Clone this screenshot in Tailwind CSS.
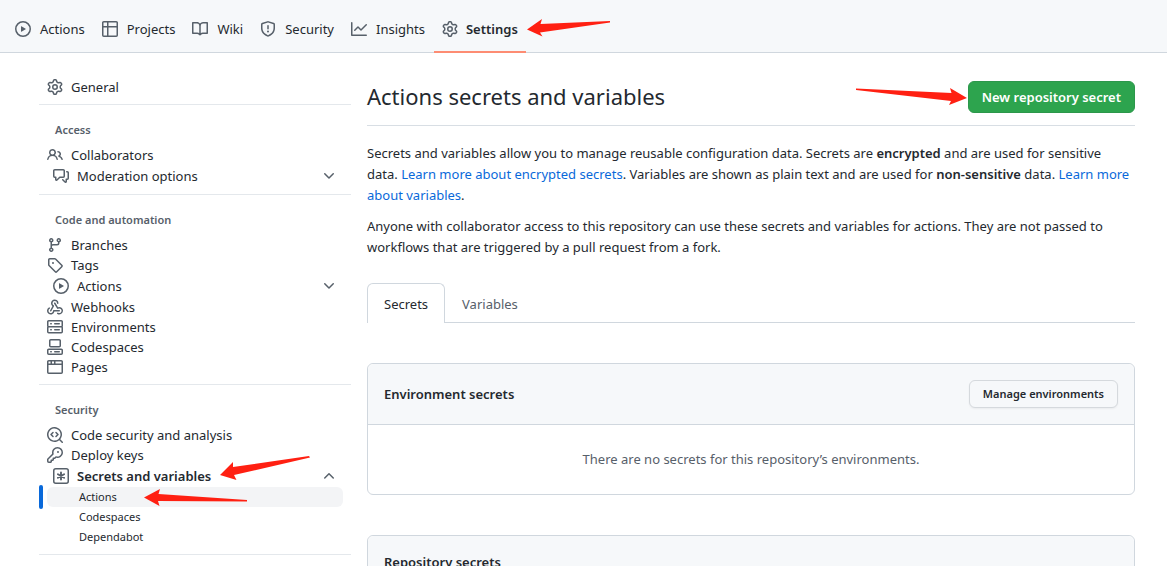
<!DOCTYPE html>
<html lang="en">
<head>
<meta charset="utf-8">
<meta name="viewport" content="width=device-width, initial-scale=1">
<title>Actions secrets and variables</title>
<script src="https://cdn.jsdelivr.net/npm/@tailwindcss/browser@4"></script>
</head>
<body class="h-screen overflow-hidden bg-white font-['Noto_Sans','Open_Sans',sans-serif] text-[13px] leading-[21px] text-[#24292f]">

<svg class="hidden" aria-hidden="true">
  <symbol id="play" viewBox="0 0 16 16"><path d="M8 0a8 8 0 1 1 0 16A8 8 0 0 1 8 0ZM1.5 8a6.5 6.5 0 1 0 13 0 6.5 6.5 0 0 0-13 0Zm4.879-2.773 4.264 2.559a.25.25 0 0 1 0 .428l-4.264 2.559A.25.25 0 0 1 6 10.559V5.442a.25.25 0 0 1 .379-.215Z"/></symbol>
  <symbol id="table" viewBox="0 0 16 16"><path d="M0 1.75C0 .784.784 0 1.75 0h12.5C15.216 0 16 .784 16 1.75v12.5A1.75 1.75 0 0 1 14.25 16H1.75A1.75 1.75 0 0 1 0 14.25ZM6.5 6.5v8h7.75a.25.25 0 0 0 .25-.25V6.5Zm8-1.5V1.75a.25.25 0 0 0-.25-.25H6.5V5Zm-13 1.5v7.75c0 .138.112.25.25.25H5v-8ZM5 5V1.5H1.75a.25.25 0 0 0-.25.25V5Z"/></symbol>
  <symbol id="book" viewBox="0 0 16 16"><path d="M0 1.75A.75.75 0 0 1 .75 1h4.253c1.227 0 2.317.59 3 1.501A3.743 3.743 0 0 1 11.006 1h4.245a.75.75 0 0 1 .75.75v10.5a.75.75 0 0 1-.75.75h-4.507a2.25 2.25 0 0 0-1.591.659l-.622.621a.75.75 0 0 1-1.06 0l-.622-.621A2.25 2.25 0 0 0 5.258 13H.75a.75.75 0 0 1-.75-.75Zm7.251 10.324.004-5.073-.002-2.253A2.25 2.25 0 0 0 5.003 2.5H1.5v9h3.757a3.75 3.75 0 0 1 1.994.574ZM8.755 4.75l-.004 7.322a3.752 3.752 0 0 1 1.992-.572H14.5v-9h-3.495a2.25 2.25 0 0 0-2.25 2.25Z"/></symbol>
  <symbol id="shield" viewBox="0 0 16 16"><path d="M7.467.133a1.748 1.748 0 0 1 1.066 0l5.25 1.68A1.75 1.75 0 0 1 15 3.48V7c0 1.566-.32 3.182-1.303 4.682-.983 1.498-2.585 2.813-5.032 3.855a1.697 1.697 0 0 1-1.33 0c-2.447-1.042-4.049-2.357-5.032-3.855C1.32 10.182 1 8.566 1 7V3.48a1.75 1.75 0 0 1 1.217-1.667Zm.61 1.429a.25.25 0 0 0-.153 0l-5.25 1.68a.25.25 0 0 0-.174.238V7c0 1.358.275 2.666 1.057 3.86.784 1.194 2.121 2.34 4.366 3.297a.196.196 0 0 0 .154 0c2.245-.956 3.582-2.104 4.366-3.298C13.225 9.666 13.5 8.36 13.5 7V3.48a.251.251 0 0 0-.174-.237l-5.25-1.68ZM8.75 4.75v3a.75.75 0 0 1-1.5 0v-3a.75.75 0 0 1 1.5 0ZM9 10.5a1 1 0 1 1-2 0 1 1 0 0 1 2 0Z"/></symbol>
  <symbol id="graph" viewBox="0 0 16 16"><path d="M1.5 1.75V13.5h13.75a.75.75 0 0 1 0 1.5H.75a.75.75 0 0 1-.75-.75V1.75a.75.75 0 0 1 1.5 0Zm14.28 2.53-5.25 5.25a.75.75 0 0 1-1.06 0L7 7.06 4.28 9.78a.751.751 0 0 1-1.042-.018.751.751 0 0 1-.018-1.042l3.25-3.25a.75.75 0 0 1 1.06 0L10 7.94l4.72-4.72a.751.751 0 0 1 1.042.018.751.751 0 0 1 .018 1.042Z"/></symbol>
  <symbol id="gear" viewBox="0 0 16 16"><path d="M8 0a8.2 8.2 0 0 1 .701.031C9.444.095 9.99.645 10.16 1.29l.288 1.107c.018.066.079.158.212.224.231.114.454.243.668.386.123.082.233.09.299.071l1.103-.303c.644-.176 1.392.021 1.82.63.27.385.506.792.704 1.218.315.675.111 1.422-.364 1.891l-.814.806c-.049.048-.098.147-.088.294.016.257.016.515 0 .772-.01.147.038.246.088.294l.814.806c.475.469.679 1.216.364 1.891a7.977 7.977 0 0 1-.704 1.217c-.428.61-1.176.807-1.82.63l-1.102-.302c-.067-.019-.177-.011-.3.071a5.909 5.909 0 0 1-.668.386c-.133.066-.194.158-.211.224l-.29 1.106c-.168.646-.715 1.196-1.458 1.26a8.006 8.006 0 0 1-1.402 0c-.743-.064-1.289-.614-1.458-1.26l-.289-1.106c-.018-.066-.079-.158-.212-.224a5.738 5.738 0 0 1-.668-.386c-.123-.082-.233-.09-.299-.071l-1.103.303c-.644.176-1.392-.021-1.82-.63a8.12 8.12 0 0 1-.704-1.218c-.315-.675-.111-1.422.363-1.891l.815-.806c.05-.048.098-.147.088-.294a6.214 6.214 0 0 1 0-.772c.01-.147-.038-.246-.088-.294l-.815-.806C.635 6.045.431 5.298.746 4.623a7.92 7.92 0 0 1 .704-1.217c.428-.61 1.176-.807 1.82-.63l1.102.302c.067.019.177.011.3-.071.214-.143.437-.272.668-.386.133-.066.194-.158.211-.224l.29-1.106C6.009.645 6.556.095 7.299.03 7.53.01 7.764 0 8 0Zm-.571 1.525c-.036.003-.108.036-.137.146l-.289 1.105c-.147.561-.549.967-.998 1.189-.173.086-.34.183-.5.29-.417.278-.97.423-1.529.27l-1.103-.303c-.109-.03-.175.016-.195.045-.22.312-.412.644-.573.99-.014.031-.021.11.059.19l.815.806c.411.406.562.957.53 1.456a4.709 4.709 0 0 0 0 .582c.032.499-.119 1.05-.53 1.456l-.815.806c-.081.08-.073.159-.059.19.162.346.353.677.573.989.02.03.085.076.195.046l1.102-.303c.56-.153 1.113-.008 1.53.27.161.107.328.204.501.29.447.222.85.629.997 1.189l.289 1.105c.029.109.101.143.137.146a6.6 6.6 0 0 0 1.142 0c.036-.003.108-.036.137-.146l.289-1.105c.147-.561.549-.967.998-1.189.173-.086.34-.183.5-.29.417-.278.97-.423 1.529-.27l1.103.303c.109.029.175-.016.195-.045.22-.313.411-.644.573-.99.014-.031.021-.11-.059-.19l-.815-.806c-.411-.406-.562-.957-.53-1.456a4.709 4.709 0 0 0 0-.582c-.032-.499.119-1.05.53-1.456l.815-.806c.081-.08.073-.159.059-.19a6.464 6.464 0 0 0-.573-.989c-.02-.03-.085-.076-.195-.046l-1.102.303c-.56.153-1.113.008-1.53-.27a4.44 4.44 0 0 0-.501-.29c-.447-.222-.85-.629-.997-1.189l-.289-1.105c-.029-.11-.101-.143-.137-.146a6.6 6.6 0 0 0-1.142 0ZM11 8a3 3 0 1 1-6 0 3 3 0 0 1 6 0ZM9.5 8a1.5 1.5 0 1 0-3.001.001A1.5 1.5 0 0 0 9.5 8Z"/></symbol>
  <symbol id="people" viewBox="0 0 16 16"><path d="M2 5.5a3.5 3.5 0 1 1 5.898 2.549 5.508 5.508 0 0 1 3.034 4.084.75.75 0 1 1-1.482.235 4 4 0 0 0-7.9 0 .75.75 0 0 1-1.482-.236A5.507 5.507 0 0 1 3.102 8.05 3.493 3.493 0 0 1 2 5.5ZM11 4a3.001 3.001 0 0 1 2.22 5.018 5.01 5.01 0 0 1 2.56 3.012.749.749 0 0 1-.885.954.752.752 0 0 1-.549-.514 3.507 3.507 0 0 0-2.522-2.372.75.75 0 0 1-.574-.73v-.352a.75.75 0 0 1 .416-.672A1.5 1.5 0 0 0 11 5.5.75.75 0 0 1 11 4Zm-5.5-.5a2 2 0 1 0-.001 3.999A2 2 0 0 0 5.5 3.5Z"/></symbol>
  <symbol id="discussion" viewBox="0 0 16 16"><path d="M1.75 1h8.5c.966 0 1.75.784 1.75 1.75v5.5A1.75 1.75 0 0 1 10.25 10H7.061l-2.574 2.573A1.458 1.458 0 0 1 2 11.543V10h-.25A1.75 1.75 0 0 1 0 8.25v-5.5C0 1.784.784 1 1.75 1ZM1.5 2.75v5.5c0 .138.112.25.25.25h1a.75.75 0 0 1 .75.75v2.19l2.72-2.72a.749.749 0 0 1 .53-.22h3.5a.25.25 0 0 0 .25-.25v-5.5a.25.25 0 0 0-.25-.25h-8.5a.25.25 0 0 0-.25.25Zm13 2a.25.25 0 0 0-.25-.25h-.5a.75.75 0 0 1 0-1.5h.5c.966 0 1.75.784 1.75 1.75v5.5A1.75 1.75 0 0 1 14.25 12H14v1.543a1.458 1.458 0 0 1-2.487 1.03L9.22 12.28a.749.749 0 0 1 .326-1.275.749.749 0 0 1 .734.215l2.22 2.22v-2.19a.75.75 0 0 1 .75-.75h1a.25.25 0 0 0 .25-.25Z"/></symbol>
  <symbol id="branch" viewBox="0 0 16 16"><path d="M9.5 3.25a2.25 2.25 0 1 1 3 2.122V6A2.5 2.5 0 0 1 10 8.5H6a1 1 0 0 0-1 1v1.128a2.251 2.251 0 1 1-1.5 0V5.372a2.25 2.25 0 1 1 1.5 0v1.836A2.493 2.493 0 0 1 6 7h4a1 1 0 0 0 1-1v-.628A2.25 2.25 0 0 1 9.5 3.25Zm-6 0a.75.75 0 1 0 1.5 0 .75.75 0 0 0-1.5 0Zm8.25-.75a.75.75 0 1 0 0 1.5.75.75 0 0 0 0-1.5ZM4.25 12a.75.75 0 1 0 0 1.5.75.75 0 0 0 0-1.5Z"/></symbol>
  <symbol id="tag" viewBox="0 0 16 16"><path d="M1 7.775V2.75C1 1.784 1.784 1 2.75 1h5.025c.464 0 .91.184 1.238.513l6.25 6.25a1.75 1.75 0 0 1 0 2.474l-5.026 5.026a1.75 1.75 0 0 1-2.474 0l-6.25-6.25A1.752 1.752 0 0 1 1 7.775Zm1.5 0c0 .066.026.13.073.177l6.25 6.25a.25.25 0 0 0 .354 0l5.025-5.025a.25.25 0 0 0 0-.354l-6.25-6.25a.25.25 0 0 0-.177-.073H2.75a.25.25 0 0 0-.25.25ZM6 5a1 1 0 1 1 0 2 1 1 0 0 1 0-2Z"/></symbol>
  <symbol id="webhook" viewBox="0 0 16 16"><path d="M5.5 4.25a2.25 2.25 0 0 1 4.5 0 .75.75 0 0 0 1.5 0 3.75 3.75 0 1 0-6.14 2.889l-2.272 4.258a.75.75 0 0 0 1.324.706L7 7.25a.75.75 0 0 0-.309-1.015A2.25 2.25 0 0 1 5.5 4.25Z"/><path d="M7.364 3.607a.75.75 0 0 1 1.03.257l2.608 4.349a3.75 3.75 0 1 1-.628 6.785.75.75 0 0 1 .752-1.299 2.25 2.25 0 1 0-.033-3.88.75.75 0 0 1-1.03-.256L7.107 4.636a.75.75 0 0 1 .257-1.03Z"/><path d="M2.9 8.776A.75.75 0 0 1 2.625 9.8 2.25 2.25 0 1 0 6 11.75a.75.75 0 0 1 .75-.751h5.5a.75.75 0 0 1 0 1.5H7.425a3.751 3.751 0 1 1-5.55-3.998.75.75 0 0 1 1.024.274Z"/></symbol>
  <symbol id="server" viewBox="0 0 16 16"><path d="M1.75 1h12.5c.966 0 1.75.784 1.75 1.75v4c0 .372-.116.717-.314 1 .198.283.314.628.314 1v4a1.75 1.75 0 0 1-1.75 1.75H1.75A1.75 1.75 0 0 1 0 12.75v-4c0-.358.109-.707.314-1a1.739 1.739 0 0 1-.314-1v-4C0 1.784.784 1 1.75 1ZM1.5 2.75v4c0 .138.112.25.25.25h12.5a.25.25 0 0 0 .25-.25v-4a.25.25 0 0 0-.25-.25H1.75a.25.25 0 0 0-.25.25Zm.25 5.75a.25.25 0 0 0-.25.25v4c0 .138.112.25.25.25h12.5a.25.25 0 0 0 .25-.25v-4a.25.25 0 0 0-.25-.25ZM7 4.75A.75.75 0 0 1 7.75 4h4.5a.75.75 0 0 1 0 1.5h-4.5A.75.75 0 0 1 7 4.75ZM7.75 10h4.5a.75.75 0 0 1 0 1.5h-4.5a.75.75 0 0 1 0-1.5ZM3 4.75A.75.75 0 0 1 3.75 4h.5a.75.75 0 0 1 0 1.5h-.5A.75.75 0 0 1 3 4.75ZM3.75 10h.5a.75.75 0 0 1 0 1.5h-.5a.75.75 0 0 1 0-1.5Z"/></symbol>
  <symbol id="codespaces" viewBox="0 0 16 16"><path d="M0 11.25c0-.966.784-1.75 1.75-1.75h12.5c.966 0 1.75.784 1.75 1.75v3A1.75 1.75 0 0 1 14.25 16H1.75A1.75 1.75 0 0 1 0 14.25Zm2-9.5C2 .784 2.784 0 3.75 0h8.5C13.216 0 14 .784 14 1.75v5a1.75 1.75 0 0 1-1.75 1.75h-8.5A1.75 1.75 0 0 1 2 6.75Zm1.75-.25a.25.25 0 0 0-.25.25v5c0 .138.112.25.25.25h8.5a.25.25 0 0 0 .25-.25v-5a.25.25 0 0 0-.25-.25Zm-2 9.5a.25.25 0 0 0-.25.25v3c0 .138.112.25.25.25h12.5a.25.25 0 0 0 .25-.25v-3a.25.25 0 0 0-.25-.25Z"/><path d="M7 12.75a.75.75 0 0 1 .75-.75h4.5a.75.75 0 0 1 0 1.5h-4.5a.75.75 0 0 1-.75-.75Zm-4 0a.75.75 0 0 1 .75-.75h.5a.75.75 0 0 1 0 1.5h-.5a.75.75 0 0 1-.75-.75Z"/></symbol>
  <symbol id="browser" viewBox="0 0 16 16"><path d="M0 2.75C0 1.784.784 1 1.75 1h12.5c.966 0 1.75.784 1.75 1.75v10.5A1.75 1.75 0 0 1 14.25 15H1.75A1.75 1.75 0 0 1 0 13.25ZM14.5 6h-13v7.25c0 .138.112.25.25.25h12.5a.25.25 0 0 0 .25-.25Zm-6-3.5v2h6V2.75a.25.25 0 0 0-.25-.25ZM5 2.5v2h2v-2Zm-3.25 0a.25.25 0 0 0-.25.25V4.5h2v-2Z"/></symbol>
  <symbol id="codescan" viewBox="0 0 16 16"><path d="M8.47 4.97a.75.75 0 0 0 0 1.06L9.94 7.5 8.47 8.97a.75.75 0 1 0 1.06 1.06l2-2a.75.75 0 0 0 0-1.06l-2-2a.75.75 0 0 0-1.06 0ZM6.53 6.03a.75.75 0 0 0-1.06-1.06l-2 2a.75.75 0 0 0 0 1.06l2 2a.75.75 0 1 0 1.06-1.06L5.06 7.5l1.47-1.47Z"/><path d="M12.246 13.307a7.501 7.501 0 1 1 1.06-1.06l2.474 2.473a.75.75 0 1 1-1.06 1.06l-2.474-2.473ZM1.5 7.5a6.002 6.002 0 0 0 3.608 5.504 6.002 6.002 0 0 0 6.486-1.117.748.748 0 0 1 .292-.293A6 6 0 1 0 1.5 7.5Z"/></symbol>
  <symbol id="key" viewBox="0 0 16 16"><path d="M10.5 0a5.499 5.499 0 1 1-1.288 10.848l-.932.932a.749.749 0 0 1-.53.22H7v.75a.749.749 0 0 1-.22.53l-.5.5a.749.749 0 0 1-.53.22H5v.75a.749.749 0 0 1-.22.53l-.5.5a.749.749 0 0 1-.53.22h-2A1.75 1.75 0 0 1 0 14.25v-2c0-.199.079-.389.22-.53l4.932-4.932A5.5 5.5 0 0 1 10.5 0Zm-4 5.5c-.001.431.069.86.205 1.269a.75.75 0 0 1-.181.768L1.5 12.56v1.69c0 .138.112.25.25.25h1.69l.06-.06v-1.19a.75.75 0 0 1 .75-.75h1.19l.06-.06v-1.19a.75.75 0 0 1 .75-.75h1.19l1.023-1.025a.75.75 0 0 1 .768-.18A4 4 0 1 0 6.5 5.5ZM11 6a1 1 0 1 1 0-2 1 1 0 0 1 0 2Z"/></symbol>
  <symbol id="asterisk" viewBox="0 0 16 16"><rect x=".75" y=".75" width="14.5" height="14.5" rx="2" fill="none" stroke="currentColor" stroke-width="1.5"/><path d="M8 4.500v7M4.900 6.200l6.200 3.600M11.100 6.200l-6.200 3.600" fill="none" stroke="currentColor" stroke-width="1.900" stroke-linecap="round"/></symbol>
  <symbol id="down" viewBox="0 0 16 16"><path d="M12.78 5.22a.749.749 0 0 1 0 1.06l-4.25 4.25a.749.749 0 0 1-1.06 0L3.22 6.28a.749.749 0 1 1 1.06-1.06L8 8.939l3.72-3.719a.749.749 0 0 1 1.06 0Z"/></symbol>
  <symbol id="up" viewBox="0 0 16 16"><path d="M3.22 10.53a.749.749 0 0 1 0-1.06l4.25-4.25a.749.749 0 0 1 1.06 0l4.25 4.25a.749.749 0 1 1-1.06 1.06L8 6.811 4.28 10.53a.749.749 0 0 1-1.06 0Z"/></symbol>
</svg>

<header class="border-b border-[#d0d7de] bg-[#f6f8fa]">
  <nav aria-label="Repository" class="flex h-[52px] items-stretch gap-[17px] pt-1.5 pl-[15px]">
    <a href="#" class="flex items-center gap-[9px]"><svg class="size-4 fill-current text-[#57606a]"><use href="#play"/></svg>Actions</a>
    <a href="#" class="flex items-center gap-[9px]"><svg class="size-4 fill-current text-[#57606a]"><use href="#table"/></svg>Projects</a>
    <a href="#" class="flex items-center gap-[9px]"><svg class="size-4 fill-current text-[#57606a]"><use href="#book"/></svg>Wiki</a>
    <a href="#" class="flex items-center gap-[9px]"><svg class="size-4 fill-current text-[#57606a]"><use href="#shield"/></svg>Security</a>
    <a href="#" class="flex items-center gap-[9px]"><svg class="size-4 fill-current text-[#57606a]"><use href="#graph"/></svg>Insights</a>
    <a href="#" aria-current="page" class="relative -mx-2 flex items-center gap-2 px-2 font-semibold"><svg class="size-4 fill-current text-[#57606a]"><use href="#gear"/></svg>Settings
      <span class="absolute inset-x-0 -bottom-px h-0.5 bg-[#fd8c73]"></span>
      <svg class="absolute top-3 left-full ml-px h-5 w-[84px] fill-[#ff2012]" viewBox="0 0 84 20"><path d="M0 11.500 15 1l-1.500 5L83 3v1.500L13 14.500l2.500 4Z"/></svg>
    </a>
  </nav>
</header>

<div class="flex gap-4 pt-6 pr-8 pl-[39px]">
  <nav aria-label="Settings" class="w-[312px] shrink-0 leading-5">
    <a href="#" class="flex h-5 items-center gap-2 pl-2"><svg class="size-4 fill-current text-[#57606a]"><use href="#gear"/></svg>General</a>

    <section class="mt-[7px] border-t border-[#e4e8ec] pt-[15px]">
      <h2 class="mb-[5px] pl-4 text-[11px] leading-5 font-semibold text-[#57606a]">Access</h2>
      <a href="#" class="flex h-5 items-center gap-2 pl-2"><svg class="size-4 fill-current text-[#57606a]"><use href="#people"/></svg>Collaborators</a>
      <button type="button" class="flex h-[22px] w-full items-center gap-2 pr-3.5 pl-3.5 text-left"><svg class="size-4 fill-current text-[#57606a]"><use href="#discussion"/></svg><span class="grow">Moderation options</span><svg class="size-4 fill-current text-[#57606a]"><use href="#down"/></svg></button>
    </section>

    <section class="mt-[7px] border-t border-[#e4e8ec] pt-[15px]">
      <h2 class="mb-[5px] pl-4 text-[11px] leading-5 font-semibold text-[#57606a]">Code and automation</h2>
      <a href="#" class="flex h-5 items-center gap-2 pl-2"><svg class="size-4 fill-current text-[#57606a]"><use href="#branch"/></svg>Branches</a>
      <a href="#" class="flex h-5 items-center gap-2 pl-2"><svg class="size-4 fill-current text-[#57606a]"><use href="#tag"/></svg>Tags</a>
      <button type="button" class="flex h-[22px] w-full items-center gap-2 pr-3.5 pl-3.5 text-left"><svg class="size-4 fill-current text-[#57606a]"><use href="#play"/></svg><span class="grow">Actions</span><svg class="size-4 fill-current text-[#57606a]"><use href="#down"/></svg></button>
      <a href="#" class="flex h-5 items-center gap-2 pl-2"><svg class="size-4 fill-current text-[#57606a]"><use href="#webhook"/></svg>Webhooks</a>
      <a href="#" class="flex h-5 items-center gap-2 pl-2"><svg class="size-4 fill-current text-[#57606a]"><use href="#server"/></svg>Environments</a>
      <a href="#" class="flex h-5 items-center gap-2 pl-2"><svg class="size-4 fill-current text-[#57606a]"><use href="#codespaces"/></svg>Codespaces</a>
      <a href="#" class="flex h-5 items-center gap-2 pl-2"><svg class="size-4 fill-current text-[#57606a]"><use href="#browser"/></svg>Pages</a>
    </section>

    <section class="mt-[7px] border-y border-[#e4e8ec] pt-[15px] pb-[7px]">
      <h2 class="mb-[5px] pl-4 text-[11px] leading-5 font-semibold text-[#57606a]">Security</h2>
      <a href="#" class="flex h-5 items-center gap-2 pl-2"><svg class="size-4 fill-current text-[#57606a]"><use href="#codescan"/></svg>Code security and analysis</a>
      <a href="#" class="flex h-5 items-center gap-2 pl-2"><svg class="size-4 fill-current text-[#57606a]"><use href="#key"/></svg>Deploy keys</a>
      <button type="button" aria-expanded="true" class="relative flex h-[22px] w-full items-center gap-2 pr-3.5 pl-3.5 text-left font-semibold"><svg class="size-4 fill-current text-[#57606a]"><use href="#asterisk"/></svg><span class="grow">Secrets and variables</span><svg class="size-4 fill-current text-[#57606a]"><use href="#up"/></svg>
        <svg class="absolute -top-2.5 left-[181px] h-[26px] w-[92px] fill-[#ff2012]" viewBox="0 0 92 26"><path d="M0 20 13 7v5L89 1l1 1.500L14 20l2.500 5Z"/></svg>
      </button>
      <a href="#" aria-current="page" class="relative mr-2 ml-2 flex h-5 items-center rounded-md bg-[#f3f4f6] pl-8 text-[11px]">Actions
        <span class="absolute -inset-y-0.5 -left-2 w-1 rounded-md bg-[#0969da]"></span>
        <svg class="absolute top-px left-[97px] h-[19px] w-[104px] fill-[#ff2012]" viewBox="0 0 104 19"><path d="M0 9.500 16 1l-1.500 5L103 12v1.500L14 13l1.500 5Z"/></svg>
      </a>
      <a href="#" class="flex h-5 items-center pl-10 text-[11px]">Codespaces</a>
      <a href="#" class="flex h-5 items-center pl-10 text-[11px]">Dependabot</a>
    </section>
  </nav>

  <main class="min-w-0 grow">
    <div class="flex items-start justify-between border-b border-[#d8dee4] pt-1 pb-3">
      <h1 class="text-[22px] leading-[30px]">Actions secrets and variables</h1>
      <div class="relative">
        <svg class="absolute top-1.5 right-full mr-px h-5 w-[112px] fill-[#ff2012]" viewBox="0 0 112 20"><path d="M112 11 95 1l1.500 5L1 1.500V3L96 14l-2 4Z"/></svg>
        <button type="button" class="block h-8 rounded-md border border-[#2c974b] bg-[#2da44e] px-[13px] leading-5 font-semibold text-white">New repository secret</button>
      </div>
    </div>

    <p class="mt-[17px]">Secrets and variables allow you to manage reusable configuration data. Secrets are <strong class="font-semibold">encrypted</strong> and are used for sensitive data. <a href="#" class="text-[#0969da]">Learn more about encrypted secrets</a>. Variables are shown as plain text and are used for <strong class="font-semibold">non-sensitive</strong> data. <a href="#" class="text-[#0969da]">Learn more about variables</a>.</p>
    <p class="mt-2.5">Anyone with collaborator access to this repository can use these secrets and variables for actions. They are not passed to workflows that are triggered by a pull request from a fork.</p>

    <div role="tablist" class="mt-[25px] flex border-b border-[#d0d7de]">
      <button type="button" role="tab" aria-selected="true" class="-mb-px h-10 rounded-t-md border border-b-0 border-[#d0d7de] bg-white px-4 pt-0.5">Secrets</button>
      <button type="button" role="tab" aria-selected="false" class="-mb-px h-10 border border-b-0 border-transparent px-4 pt-0.5 text-[#57606a]">Variables</button>
    </div>

    <section class="mt-10 rounded-md border border-[#d0d7de]">
      <div class="flex items-center justify-between rounded-t-md border-b border-[#d0d7de] bg-[#f6f8fa] p-4">
        <h2 class="font-semibold">Environment secrets</h2>
        <button type="button" class="h-7 rounded-md border border-[#d5d9dd] bg-[#f6f8fa] px-[13px] text-[11px] leading-5 font-semibold shadow-xs">Manage environments</button>
      </div>
      <p class="px-4 py-6 text-center text-[#57606a]">There are no secrets for this repository’s environments.</p>
    </section>

    <section class="mt-10 rounded-md border border-[#d0d7de]">
      <div class="rounded-t-md border-b border-[#d0d7de] bg-[#f6f8fa] p-4">
        <h2 class="font-semibold">Repository secrets</h2>
      </div>
    </section>
  </main>
</div>
</body>
</html>
